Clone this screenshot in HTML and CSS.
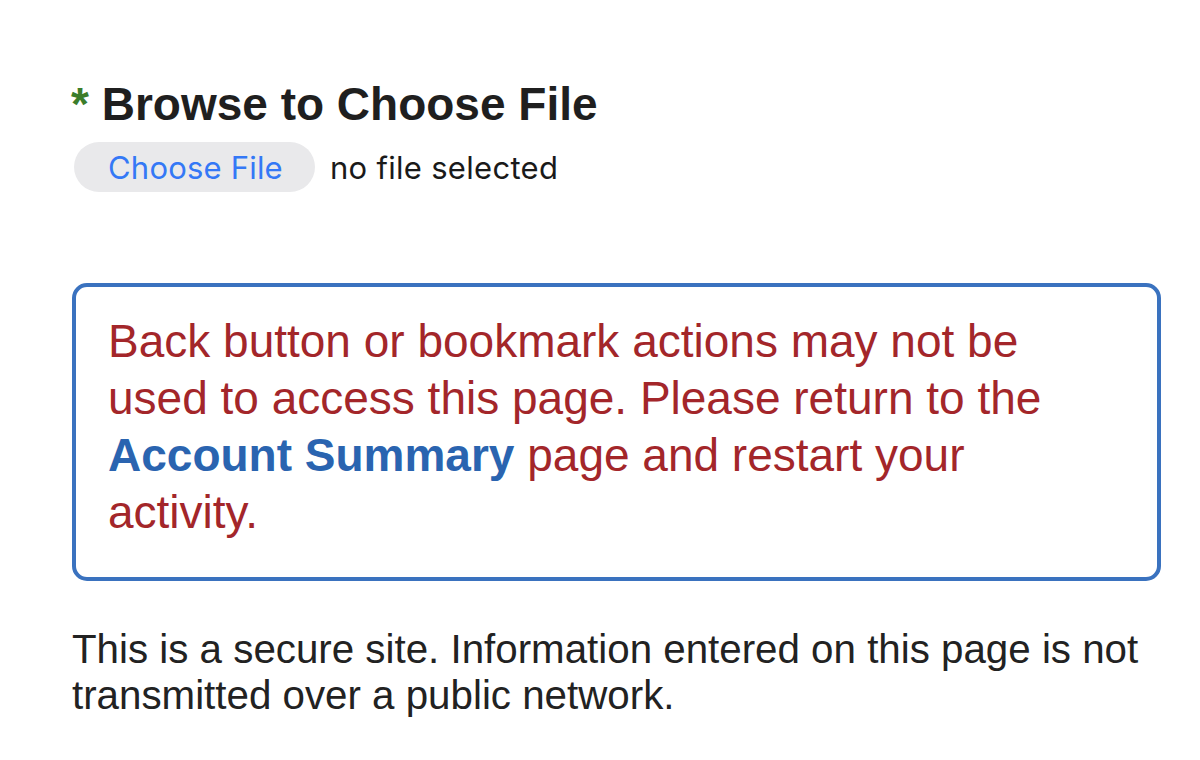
FILE: index.html
```html
<!DOCTYPE html>
<html lang="en">
<head>
<meta charset="utf-8">
<title>Browse to Choose File</title>
<link rel="stylesheet" href="styles.css">
</head>
<body>
<main class="page">
  <h1 class="title"><span class="req">*</span> Browse to Choose File</h1>
  <div class="file-row">
    <span class="file-btn">Choose File</span>
    <span class="file-status">no file selected</span>
  </div>
  <div class="notice">
    <p class="notice-text">Back button or bookmark actions may not be used to access this page. Please return to the <a class="notice-link" href="#">Account Summary</a> page and restart your activity.</p>
  </div>
  <p class="footer-note">This is a secure site. Information entered on this page is not transmitted over a public network.</p>
</main>
</body>
</html>
```

FILE: styles.css
```css
html, body {
  margin: 0;
  padding: 0;
  background: #ffffff;
}

.page {
  padding: 77px 39px 0 71px;
  font-family: "Liberation Sans", Arial, sans-serif;
  color: #222222;
}

.title {
  margin: 0;
  font-size: 46px;
  line-height: 54px;
  font-weight: 700;
  color: #1f1f1f;
}

.req {
  color: #3b7d2b;
}

.file-row {
  display: flex;
  align-items: center;
  gap: 15px;
  margin-top: 11px;
  margin-left: 3px;
}

.file-btn {
  display: inline-flex;
  align-items: center;
  height: 50px;
  padding: 0 32px 0 34px;
  border-radius: 25px;
  background: #e9e9eb;
  color: #3478f6;
  font-family: "Inter", "Liberation Sans", sans-serif;
  font-size: 31px;
  letter-spacing: 0.2px;
}

.file-status {
  font-family: "Inter", "Liberation Sans", sans-serif;
  font-size: 31px;
  letter-spacing: 0.3px;
  color: #1a1a1a;
}

.notice {
  margin-top: 91px;
  margin-left: 1px;
  border: 4px solid #3a72bf;
  border-radius: 15px;
  padding: 26px 32px 36px 32px;
}

.notice-text {
  margin: 0;
  font-size: 46px;
  line-height: 57px;
  color: #a3262a;
}

.notice-link {
  color: #2a64b0;
  font-weight: 700;
  text-decoration: none;
}

.footer-note {
  margin: 46px 0 0 1px;
  font-size: 40.3px;
  line-height: 46px;
  color: #222222;
}
```
